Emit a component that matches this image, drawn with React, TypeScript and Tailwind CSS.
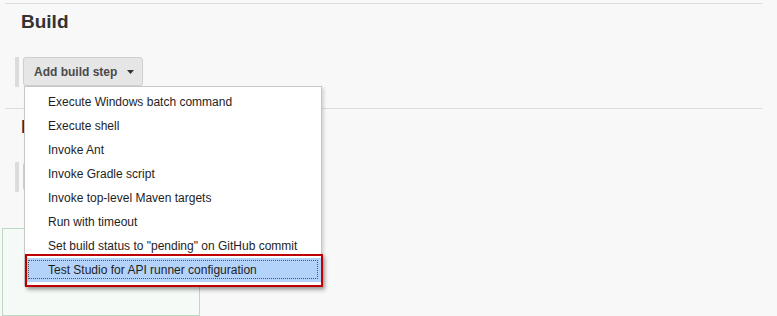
import React from "react";

const items = [
  "Execute Windows batch command",
  "Execute shell",
  "Invoke Ant",
  "Invoke Gradle script",
  "Invoke top-level Maven targets",
  "Run with timeout",
  'Set build status to "pending" on GitHub commit',
];

function Caret() {
  return (
    <svg width="7" height="4" viewBox="0 0 7 4" className="ml-[10px] mt-[1px]">
      <path d="M0 0h7L3.5 4z" fill="#333" />
    </svg>
  );
}

function StepRow({ label }: { label: string }) {
  return (
    <div className="flex ml-[15px] mt-[23px]">
      <div className="w-[4px] h-[30px] bg-[#dcdcdc]" />
      <div className="ml-[4px] h-[29px] w-[120px] rounded-[3px] border border-[#cfcfcf] bg-[#e6e6e6] flex items-center pl-[10px] text-[12px] font-bold text-[#4a4a4a] whitespace-nowrap">
        {label}
        <Caret />
      </div>
    </div>
  );
}

export default function App() {
  return (
    <div className="relative w-[777px] h-[316px] overflow-hidden bg-[#f8f8f8] font-['Liberation_Sans',Arial,sans-serif]">
      <div className="flex flex-col pt-[3px]">
        <div className="ml-[5px] w-[757px] border-t border-[#dcdcdc]" />
        <h2 className="ml-[21px] mt-[6px] text-[19px] leading-[24px] font-bold text-[#333]">Build</h2>
        <StepRow label="Add build step" />
        <div className="ml-[5px] mt-[21px] w-[757px] border-t border-[#dcdcdc]" />
        <h2 className="ml-[21px] mt-[6px] text-[19px] leading-[24px] font-bold text-[#333]">Post-build Actions</h2>
        <StepRow label="Add post-build action" />
        <div className="ml-[2px] mt-[36px] w-[198px] h-[88px] border border-[#bcd9c4] bg-[#f6faf6]" />
        <div className="h-px w-full bg-[#d0d0d0]" />
      </div>

      <div className="absolute left-[24px] top-[86px] w-[298px] bg-white border border-[#c8c8c8] shadow-[2px_2px_3px_rgba(0,0,0,0.15)] pt-[3px] pb-[3px] text-[12px] text-[#1e1e1e]">
        {items.map((t) => (
          <div key={t} className="h-[24px] leading-[24px] pl-[23px] whitespace-nowrap">
            {t}
          </div>
        ))}
        <div className="h-[24px] ml-[2px] bg-[#b3d3fb] pl-[1px] pr-[3px] pt-[2px] pb-[3px]">
          <div className="h-full border border-dotted border-[#555] flex items-center pl-[19px] whitespace-nowrap">
            Test Studio for API runner configuration
          </div>
        </div>
      </div>

      <div className="absolute left-[25px] top-[254px] w-[298px] h-[33px] border-2 border-[#c00000] shadow-[2px_3px_4px_rgba(0,0,0,0.3)]" />
    </div>
  );
}
